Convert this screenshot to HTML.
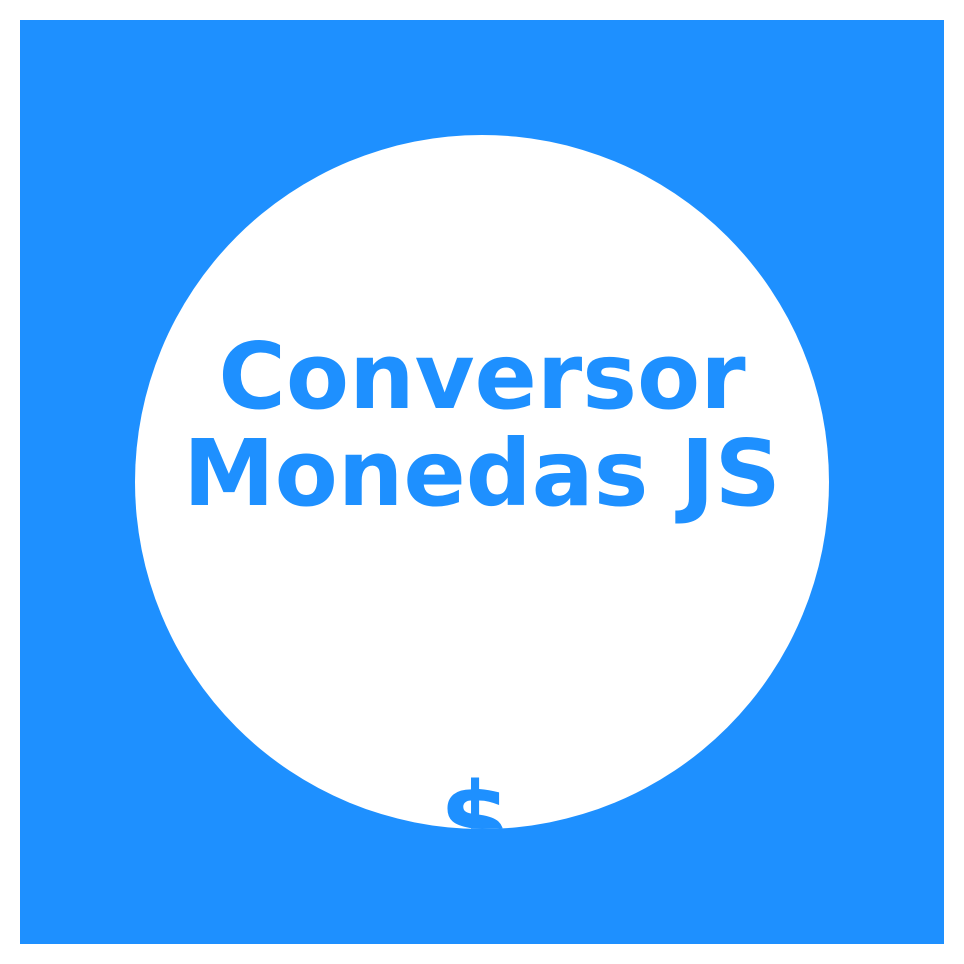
<!DOCTYPE html>
<html><head><style>html,body{margin:0;padding:0;background:#fff;width:964px;height:964px;overflow:hidden}</style></head>
<body>
<svg width="964" height="964" xmlns="http://www.w3.org/2000/svg">
<defs><clipPath id="c"><circle cx="482" cy="482" r="347"/></clipPath></defs>
<rect x="20" y="20" width="924" height="924" fill="#1E90FF"/>
<circle cx="482" cy="482" r="347" fill="#fff"/>
<g font-family="DejaVu Sans, sans-serif" font-weight="bold" fill="#1E90FF" text-anchor="middle">
<text x="482" y="408" font-size="92">Conversor</text>
<text x="482" y="505" font-size="92">Monedas JS</text>
<text x="475" y="855" font-size="102" clip-path="url(#c)">$</text>
</g>
</svg>
</body></html>
